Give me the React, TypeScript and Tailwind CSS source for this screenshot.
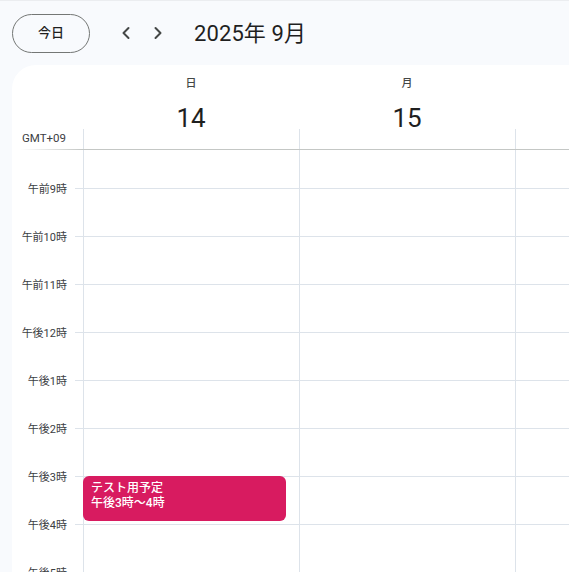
import React from 'react';
import { ChevronLeft, ChevronRight } from 'lucide-react';

const FONT = { fontFamily: 'Roboto, "Noto Sans CJK JP", sans-serif' };

const days = [
  { name: '日', date: 14 },
  { name: '月', date: 15 },
];

const hours = ['午前9時', '午前10時', '午前11時', '午後12時', '午後1時', '午後2時', '午後3時', '午後4時', '午後5時'];

// first row is scrolled partly out of view
const rowHeights = [39, 48, 48, 48, 48, 48, 48, 48, 48, 48];

function GridRows() {
  return (
    <>
      {rowHeights.map((h, i) => (
        <div key={i} className="border-b border-[#dde3ea] shrink-0" style={{ height: h }} />
      ))}
    </>
  );
}

export default function App() {
  return (
    <div className="w-[569px] h-[572px] overflow-hidden bg-[#f8fafd] border-t border-[#ebedf0] flex flex-col" style={FONT}>
      {/* top bar */}
      <div className="h-[64px] shrink-0 flex items-center pl-3">
        <button className="w-[78px] h-[39px] rounded-full border border-[#747775] text-[13px] font-medium text-[#1f1f1f]">
          今日
        </button>
        <div className="flex items-center ml-[26px] gap-[12px]">
          <button className="w-[20px] h-[20px] flex items-center justify-center text-[#444746]">
            <ChevronLeft size={20} strokeWidth={2.4} />
          </button>
          <button className="w-[20px] h-[20px] flex items-center justify-center text-[#444746]">
            <ChevronRight size={20} strokeWidth={2.4} />
          </button>
        </div>
        <h1 className="ml-[26px] text-[22px] text-[#1f1f1f] tracking-[0.1px]">2025年 9月</h1>
      </div>

      {/* main panel */}
      <div className="flex-1 ml-3 bg-white rounded-tl-[24px] overflow-hidden flex flex-col">
        {/* header */}
        <div className="flex shrink-0">
          <div className="w-[71px] shrink-0 flex flex-col justify-end">
            <div className="h-[20px] pl-[10px] pt-[1px] text-[11.5px] text-[#3c4043] leading-[16px]">GMT+09</div>
            <div className="h-px ml-2 bg-gradient-to-r from-white to-[#c4c7c5]" />
          </div>
          {days.map((d) => (
            <div key={d.date} className="w-[216px] shrink-0 flex flex-col">
              <div className="h-[64px] flex flex-col items-center">
                <div className="mt-[11px] text-[11px] font-medium text-[#444746] leading-[16px]">{d.name}</div>
                <div className="mt-[11px] text-[26px] text-[#1f1f1f] leading-[30px]">{d.date}</div>
              </div>
              <div className="h-[20px] border-l border-[#dde3ea]" />
              <div className="h-px bg-[#c4c7c5]" />
            </div>
          ))}
          <div className="flex-1 flex flex-col justify-end">
            <div className="h-[20px] border-l border-[#dde3ea]" />
            <div className="h-px bg-[#c4c7c5]" />
          </div>
        </div>

        {/* body */}
        <div className="flex flex-1 overflow-hidden">
          <div className="w-[63px] shrink-0 flex flex-col pt-[16px]">
            {hours.map((h) => (
              <div key={h} className="h-[48px] shrink-0 flex items-center justify-end pr-[8px] text-[11px] text-[#3c4043]">
                {h}
              </div>
            ))}
          </div>
          <div className="w-[8px] shrink-0 flex flex-col">
            <GridRows />
          </div>
          {days.map((d, i) => (
            <div key={d.date} className="relative w-[216px] shrink-0 flex flex-col border-l border-[#dde3ea]">
              <GridRows />
              {i === 0 && (
                <div className="absolute left-[-1px] top-[326px] w-[203px] h-[45px] rounded-[6px] bg-[#d81b60] px-2 pt-[5px] text-white text-[12px] font-medium leading-[15px]">
                  <div>テスト用予定</div>
                  <div>午後3時～4時</div>
                </div>
              )}
            </div>
          ))}
          <div className="flex-1 flex flex-col border-l border-[#dde3ea]">
            <GridRows />
          </div>
        </div>
      </div>
    </div>
  );
}
